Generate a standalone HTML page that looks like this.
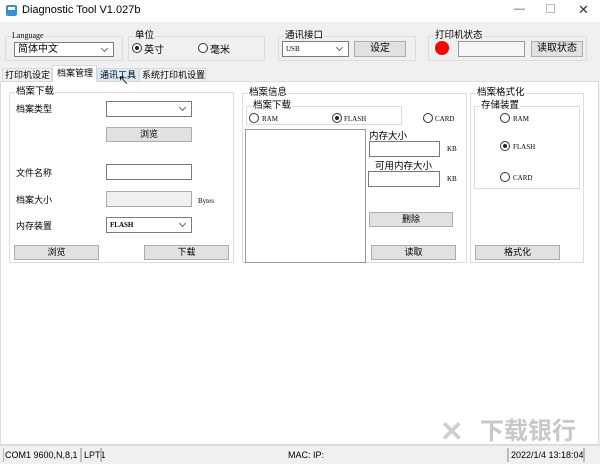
<!DOCTYPE html>
<html><head><meta charset="utf-8"><style>
*{box-sizing:border-box;margin:0;padding:0}
body{width:600px;height:464px;background:#f0f0f0;font-family:"Liberation Sans","Noto Sans CJK SC",sans-serif;font-size:9px;color:#000;position:relative;overflow:hidden}
.a{position:absolute;white-space:nowrap}
.grp{position:absolute;border:1px solid #dcdcdc}
.lg{position:absolute;top:-7px;left:5px;background:inherit;padding:0 1px;font-size:9.5px;line-height:12px}
.btn{position:absolute;background:#e1e1e1;border:1px solid #adadad;text-align:center;font-size:9px}
.in{position:absolute;background:#fff;border:1px solid #7a7a7a}
.cb{position:absolute;background:#fff;border:1px solid #7a7a7a;font-family:"Liberation Serif",serif;font-size:7px;padding-left:3px}
.cb:after{content:"";position:absolute;right:6px;top:50%;margin-top:-4px;width:4px;height:4px;border-right:1px solid #666;border-bottom:1px solid #666;transform:rotate(45deg)}
.r{position:absolute;width:10px;height:10px;border:1px solid #333;border-radius:50%;background:#fff}
.r.on:after{content:"";position:absolute;left:2px;top:2px;width:4px;height:4px;border-radius:50%;background:#222}
.mono{font-family:"Liberation Serif",serif;font-size:7px}
.tab{position:absolute;top:68px;height:14px;border:1px solid #d9d9d9;background:#f0f0f0;line-height:12px;font-size:9px;padding-left:2px}
</style></head><body>
<div class="a" style="left:0;top:0;width:600px;height:22px;background:#fff"></div>
<div class="a" style="left:6px;top:5px;width:11px;height:11px;background:#3a8fd6;border-radius:2px"></div>
<div class="a" style="left:8px;top:7px;width:7px;height:3px;background:#fff"></div>
<div class="a" style="left:22px;top:4px;font-size:11px">Diagnostic Tool V1.027b</div>
<div class="a" style="left:514px;top:3px;font-size:11px;color:#555">—</div>
<div class="a" style="left:546px;top:4px;width:9px;height:9px;border:1px solid #bbb"></div>
<div class="a" style="left:578px;top:2px;font-size:13px;color:#333">✕</div>

<div class="grp" style="left:5px;top:36px;width:118px;height:25px;background:#f0f0f0"><span class="lg" style="font-family:'Liberation Serif',serif;font-size:8px">Language</span></div>
<div class="cb" style="left:14px;top:42px;width:100px;height:15px;font-family:'Liberation Sans','Noto Sans CJK SC',sans-serif;font-size:10px;line-height:13px">简体中文</div>
<div class="grp" style="left:128px;top:36px;width:137px;height:25px;background:#f0f0f0"><span class="lg">单位</span></div>
<div class="r on" style="left:132px;top:43px"></div><div class="a" style="left:144px;top:41px;font-size:10px">英寸</div>
<div class="r" style="left:198px;top:43px"></div><div class="a" style="left:210px;top:41px;font-size:10px">毫米</div>
<div class="grp" style="left:278px;top:36px;width:138px;height:25px;background:#f0f0f0"><span class="lg">通讯接口</span></div>
<div class="cb" style="left:282px;top:41px;width:67px;height:16px;line-height:14px">USB</div>
<div class="btn" style="left:354px;top:41px;width:52px;height:16px;line-height:14px;font-size:10px">设定</div>
<div class="grp" style="left:428px;top:36px;width:159px;height:25px;background:#f0f0f0"><span class="lg">打印机状态</span></div>
<div class="a" style="left:435px;top:41px;width:14px;height:14px;border-radius:50%;background:#f00"></div>
<div class="in" style="left:458px;top:41px;width:67px;height:16px;border-color:#999;background:#f6f6f6"></div>
<div class="btn" style="left:531px;top:41px;width:52px;height:16px;line-height:14px;font-size:10px">读取状态</div>

<div class="a" style="left:0;top:81px;width:599px;height:364px;background:#fff;border:1px solid #dcdcdc"></div>
<div class="tab" style="left:2px;width:50px">打印机设定</div>
<div class="a" style="left:52px;top:65px;width:45px;height:17px;border:1px solid #d9d9d9;border-bottom:none;background:#fff;padding-left:4px;line-height:15px;font-size:9px">档案管理</div>
<div class="tab" style="left:97px;width:42px;background:#d8eaf9">通讯工具</div>
<div class="tab" style="left:139px;width:67px">系统打印机设置</div>
<div class="a" style="left:118px;top:72px;font-size:11px">↖</div>

<div class="grp" style="left:9px;top:92px;width:225px;height:171px;background:#fff"><span class="lg">档案下载</span></div>
<div class="a" style="left:16px;top:102px">档案类型</div>
<div class="cb" style="left:106px;top:101px;width:86px;height:16px"></div>
<div class="btn" style="left:106px;top:127px;width:86px;height:15px;line-height:13px">浏览</div>
<div class="a" style="left:16px;top:166px">文件名称</div>
<div class="in" style="left:106px;top:164px;width:86px;height:16px"></div>
<div class="a" style="left:16px;top:193px">档案大小</div>
<div class="in" style="left:106px;top:191px;width:86px;height:16px;background:#f0f0f0;border-color:#aaa"></div>
<div class="a mono" style="left:198px;top:197px">Bytes</div>
<div class="a" style="left:16px;top:219px">内存装置</div>
<div class="cb" style="left:106px;top:217px;width:86px;height:16px;line-height:14px;font-weight:bold">FLASH</div>
<div class="btn" style="left:14px;top:245px;width:85px;height:15px;line-height:13px">浏览</div>
<div class="btn" style="left:144px;top:245px;width:85px;height:15px;line-height:13px">下载</div>

<div class="grp" style="left:242px;top:93px;width:225px;height:170px;background:#fff"><span class="lg">档案信息</span></div>
<div class="grp" style="left:246px;top:106px;width:156px;height:19px;background:#fff"><span class="lg">档案下载</span></div>
<div class="r" style="left:249px;top:113px"></div><div class="a mono" style="left:262px;top:115px">RAM</div>
<div class="r on" style="left:332px;top:113px"></div><div class="a mono" style="left:344px;top:115px">FLASH</div>
<div class="r" style="left:423px;top:113px"></div><div class="a mono" style="left:435px;top:115px">CARD</div>
<div class="a" style="left:245px;top:129px;width:121px;height:134px;border:1px solid #999;background:#fff"></div>
<div class="a" style="left:369px;top:128px;font-size:9.5px">内存大小</div>
<div class="in" style="left:369px;top:141px;width:71px;height:16px"></div>
<div class="a mono" style="left:447px;top:145px">KB</div>
<div class="a" style="left:375px;top:158px;font-size:9.5px">可用内存大小</div>
<div class="in" style="left:368px;top:171px;width:72px;height:16px"></div>
<div class="a mono" style="left:447px;top:175px">KB</div>
<div class="btn" style="left:369px;top:212px;width:84px;height:15px;line-height:13px">删除</div>
<div class="btn" style="left:371px;top:245px;width:85px;height:15px;line-height:13px">读取</div>

<div class="grp" style="left:470px;top:93px;width:114px;height:170px;background:#fff"><span class="lg">档案格式化</span></div>
<div class="grp" style="left:474px;top:106px;width:106px;height:83px;background:#fff"><span class="lg">存储装置</span></div>
<div class="r" style="left:500px;top:113px"></div><div class="a mono" style="left:513px;top:115px">RAM</div>
<div class="r on" style="left:500px;top:141px"></div><div class="a mono" style="left:513px;top:143px">FLASH</div>
<div class="r" style="left:500px;top:172px"></div><div class="a mono" style="left:513px;top:174px">CARD</div>
<div class="btn" style="left:475px;top:245px;width:85px;height:15px;line-height:13px">格式化</div>

<div class="a" style="left:0;top:445px;width:600px;height:19px;background:#f0f0f0;border-top:1px solid #dcdcdc"></div>
<div class="a" style="left:3px;top:448px;width:1px;height:14px;background:#bbb"></div>
<div class="a" style="left:5px;top:450px;font-size:9px">COM1 9600,N,8,1</div>
<div class="a" style="left:80px;top:448px;width:2px;height:14px;background:#bbb"></div>
<div class="a" style="left:84px;top:450px;font-size:9px">LPT1</div>
<div class="a" style="left:100px;top:448px;width:2px;height:14px;background:#bbb"></div>
<div class="a" style="left:288px;top:450px;font-size:9px">MAC: IP:</div>
<div class="a" style="left:507px;top:448px;width:2px;height:14px;background:#bbb"></div>
<div class="a" style="left:511px;top:450px;font-size:9px">2022/1/4 13:18:04</div>
<div class="a" style="left:583px;top:448px;width:2px;height:14px;background:#bbb"></div>

<div class="a" style="left:440px;top:418px;font-size:28px;line-height:1;color:#cfcfcf;font-weight:bold;z-index:5">✕</div>
<div class="a" style="left:480px;top:420px;font-size:24px;line-height:1;color:#c8c8c8;font-weight:bold;z-index:5">下载银行</div>
</body></html>
